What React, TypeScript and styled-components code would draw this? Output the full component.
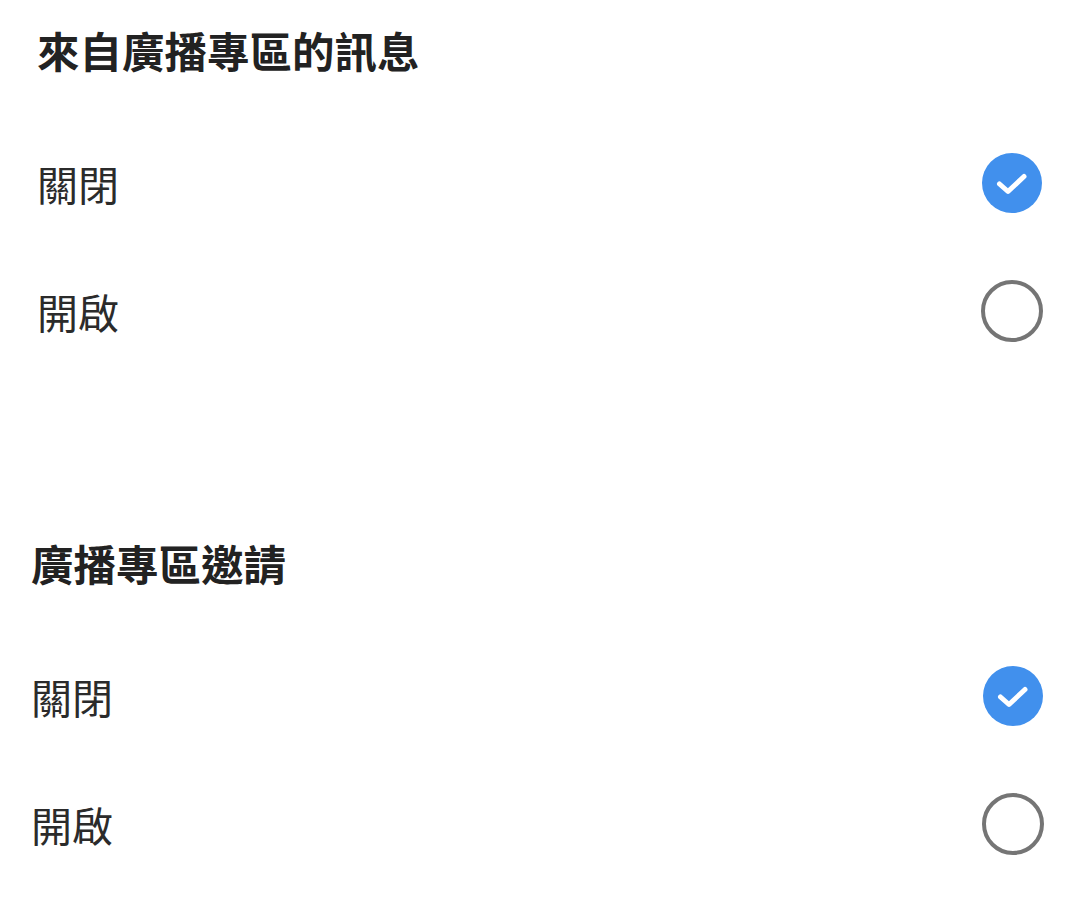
import styled, { createGlobalStyle } from "styled-components"

const GlobalStyle = createGlobalStyle`
    html, body {
        margin: 0;
        padding: 0;
        background: #ffffff;
    }
    body {
        font-family: "Noto Sans CJK TC", "Noto Sans", sans-serif;
    }
`

type optionType = {
    label: string
    checked: boolean
}

type sectionPropsType = {
    title: string
    options: optionType[]
    inset: number
    edge: number
    top: number
}

const Radio = (props: { checked: boolean }) => {
    if (props.checked) {
        return (
            <RadioBox>
                <svg width="62" height="62" viewBox="0 0 62 62">
                    <circle cx="31" cy="31" r="30" fill="#4190ED" />
                    <path
                        d="M18.5 32 L27 39.5 L43 24.5"
                        fill="none"
                        stroke="#ffffff"
                        strokeWidth="5"
                        strokeLinecap="round"
                        strokeLinejoin="round"
                    />
                </svg>
            </RadioBox>
        )
    }
    return (
        <RadioBox>
            <svg width="62" height="62" viewBox="0 0 62 62">
                <circle cx="31" cy="31" r="29" fill="none" stroke="#757575" strokeWidth="4" />
            </svg>
        </RadioBox>
    )
}

const Section = (props: sectionPropsType) => {
    return (
        <StyledSection $inset={props.inset} $edge={props.edge} $top={props.top}>
            <Title>{props.title}</Title>
            <List>
                {props.options.map((o) => (
                    <Row key={o.label}>
                        <Label>{o.label}</Label>
                        <Radio checked={o.checked} />
                    </Row>
                ))}
            </List>
        </StyledSection>
    )
}

export default function App() {
    const options = [
        { label: "關閉", checked: true },
        { label: "開啟", checked: false },
    ]
    return (
        <Page>
            <GlobalStyle />
            <Section title="來自廣播專區的訊息" options={options} inset={37} edge={37} top={20} />
            <Section title="廣播專區邀請" options={options} inset={31} edge={36} top={158} />
        </Page>
    )
}

const Page = styled.div`
    width: 1080px;
    height: 904px;
    overflow: hidden;
    background: #ffffff;
`

const StyledSection = styled.section<{ $inset: number; $edge: number; $top: number }>`
    padding: ${(p) => p.$top}px ${(p) => p.$edge}px 0 ${(p) => p.$inset}px;
`

const Title = styled.h2`
    margin: 0;
    font-size: 42.5px;
    line-height: 60px;
    font-weight: 700;
    color: #222222;
`

const List = styled.div`
    margin-top: 39px;
    display: flex;
    flex-direction: column;
`

const Row = styled.div`
    height: 128px;
    display: flex;
    align-items: center;
    justify-content: space-between;
`

const Label = styled.span`
    font-size: 41px;
    font-weight: 400;
    color: #2b2b2b;
    line-height: 1;
`

const RadioBox = styled.span`
    width: 62px;
    height: 62px;
    display: flex;
`
